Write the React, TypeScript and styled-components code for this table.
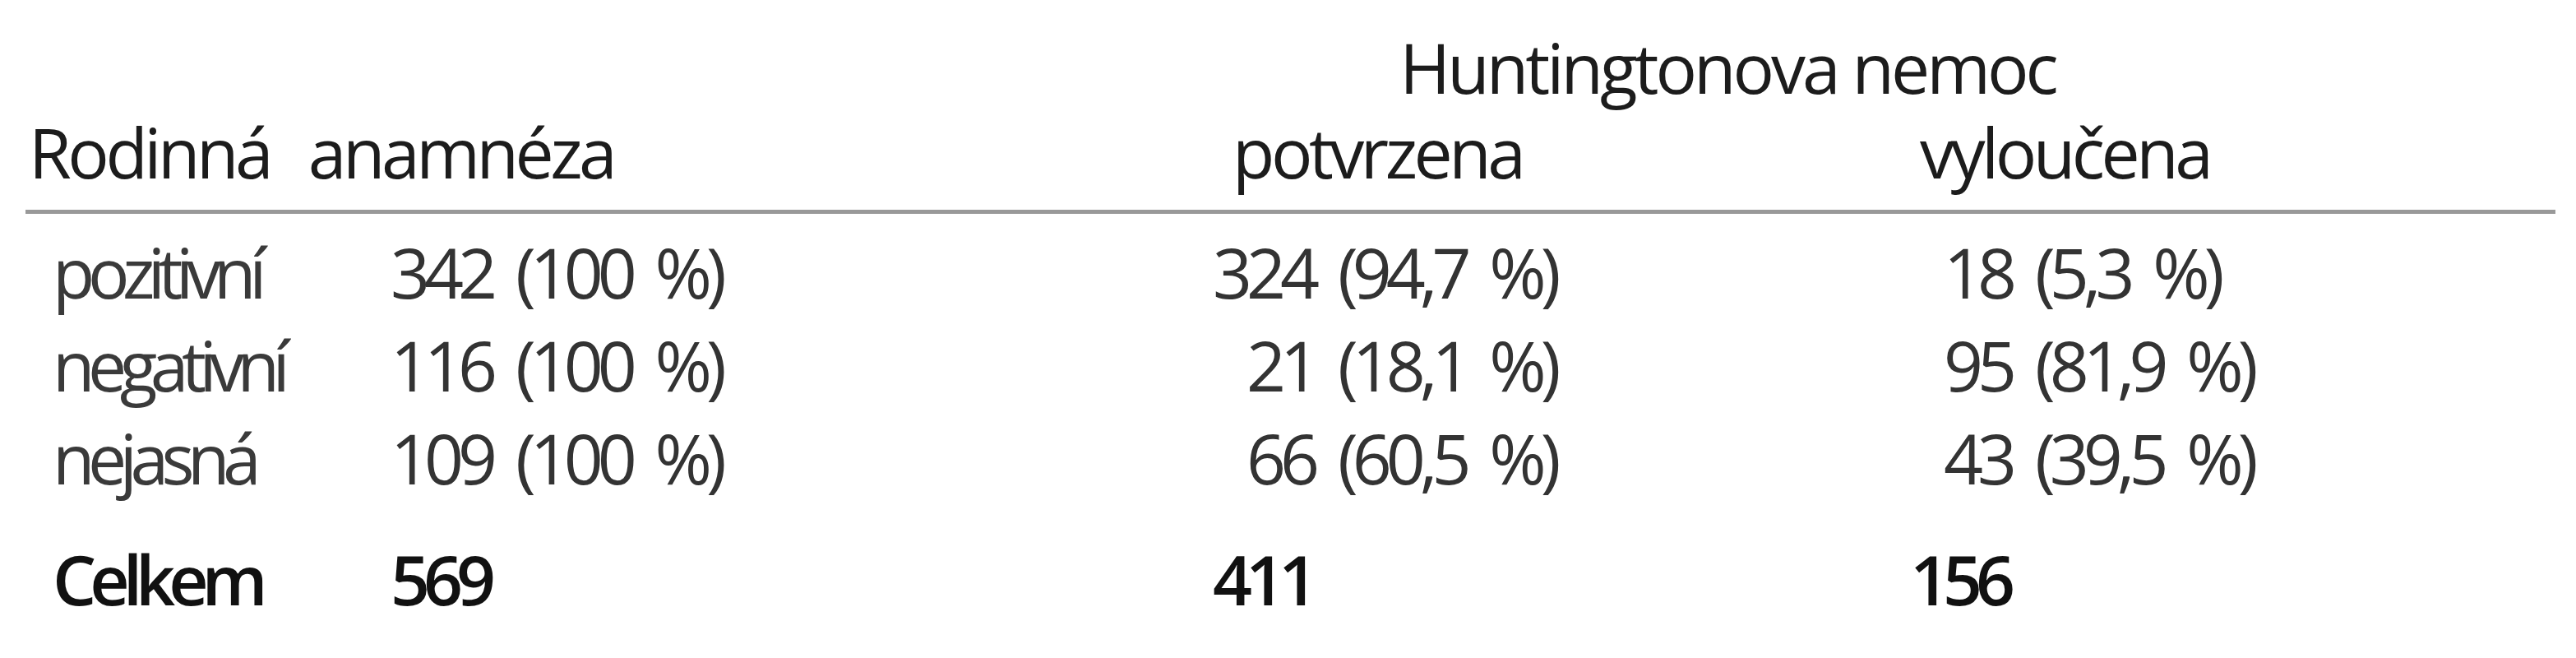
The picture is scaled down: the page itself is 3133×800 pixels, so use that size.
import styled, { createGlobalStyle } from "styled-components";

const GlobalStyle = createGlobalStyle`
  html, body {
    margin: 0;
    padding: 0;
    background: #ffffff;
  }
  body {
    font-family: "Open Sans", "Noto Sans", sans-serif;
  }
`;

const Table = styled.div`
  width: 3077px;
  margin-left: 31px;
  padding-top: 30px;
  font-size: 84px;
  color: #1c1c1c;
`;

const Row = styled.div<{ $height: number }>`
  display: grid;
  grid-template-columns: 444px 1000px 848px 404px 1fr;
  height: ${({ $height }) => $height}px;
  line-height: ${({ $height }) => $height}px;
  white-space: pre;
`;

const HeadRow = styled(Row)`
  border-bottom: 5px solid #999999;
  padding-bottom: 19px;
  margin-bottom: 14px;
  letter-spacing: -4.5px;
  word-spacing: 6px;
`;

const TotalRow = styled(Row)`
  margin-top: 34px;
  font-weight: 600;
  color: #111111;
  letter-spacing: -8px;
`;

const GroupTitle = styled.div`
  grid-column: 3 / 5;
  text-align: center;
  letter-spacing: -4px;
`;

const Cell = styled.div<{ $span?: number; $pad?: number }>`
  grid-column: span ${({ $span }) => $span ?? 1};
  padding-left: ${({ $pad }) => $pad ?? 0}px;
`;

const Label = styled(Cell)`
  color: #3a3a3a;
  letter-spacing: -8.5px;
`;

const Value = styled(Cell)`
  color: #333333;
  letter-spacing: -7px;
  word-spacing: 14px;
`;

const rows = [
  ["pozitivní", "342 (100 %)", "324 (94,7 %)", "\u200718 (5,3 %)"],
  ["negativní", "116 (100 %)", "\u200721 (18,1 %)", "\u200795 (81,9 %)"],
  ["nejasná", "109 (100 %)", "\u200766 (60,5 %)", "\u200743 (39,5 %)"],
];

export default function App() {
  return (
    <>
      <GlobalStyle />
      <Table>
        <Row $height={103}>
          <GroupTitle>Huntingtonova nemoc</GroupTitle>
        </Row>
        <HeadRow $height={103}>
          <Cell $span={2} $pad={4}>
            Rodinná  anamnéza
          </Cell>
          <Cell $pad={24}>potvrzena</Cell>
          <Cell $pad={12}>vyloučena</Cell>
        </HeadRow>
        {rows.map((r) => (
          <Row key={r[0]} $height={113}>
            <Label $pad={33}>{r[0]}</Label>
            <Value>{r[1]}</Value>
            <Value>{r[2]}</Value>
            <Value>{r[3]}</Value>
          </Row>
        ))}
        <TotalRow $height={113}>
          <Cell $pad={33}>Celkem</Cell>
          <Cell>569</Cell>
          <Cell>411</Cell>
          <Cell>156</Cell>
        </TotalRow>
      </Table>
    </>
  );
}
